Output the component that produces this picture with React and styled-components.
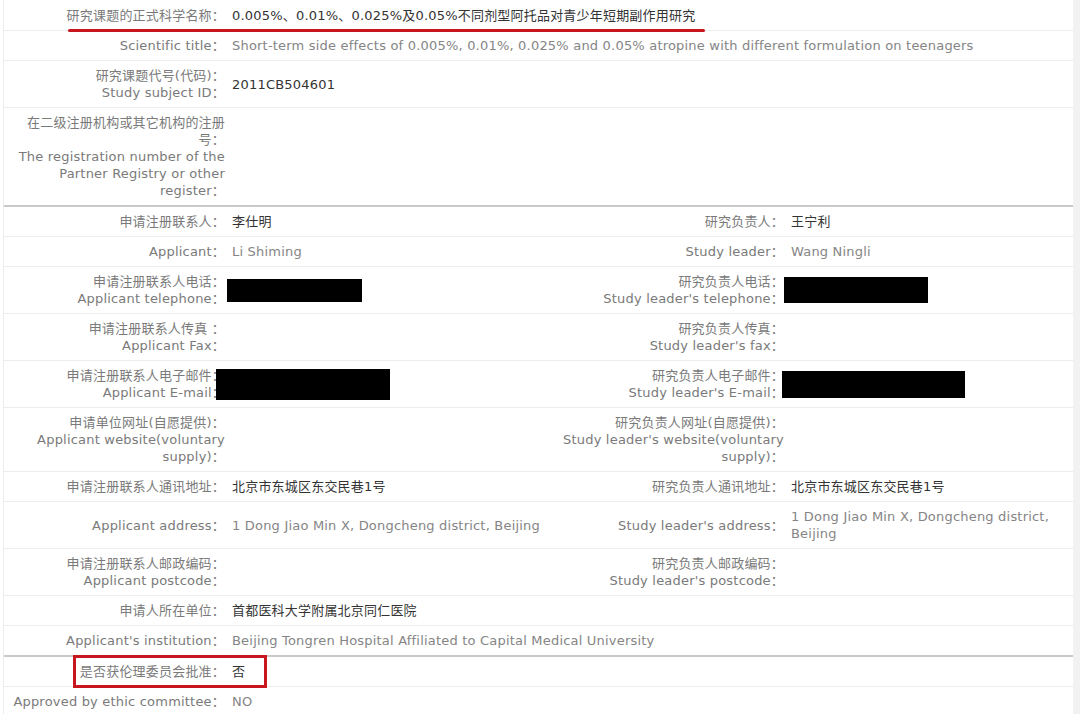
import styled, { createGlobalStyle } from "styled-components"

const Global = createGlobalStyle`
  html, body {
    margin: 0;
    padding: 0;
    background: #ffffff;
  }
  body {
    font-family: "DejaVu Sans", "Noto Sans CJK SC", sans-serif;
    font-size: 13px;
    letter-spacing: 0.2px;
  }
`

const Page = styled.div`
  display: flex;
  width: 1080px;
  height: 714px;
  overflow: hidden;
  background: #ffffff;
`

const Table = styled.div`
  flex: 1;
  margin-left: 3px;
  padding-top: 1px;
  border-left: 1px solid #ededed;
  display: flex;
  flex-direction: column;
`

const Strip = styled.div`
  width: 7px;
  background: #f2f2f2;
`

const Row = styled.div`
  position: relative;
  display: grid;
  grid-template-columns: ${p => (p.$split ? "228px 319px 240px 1fr" : "228px 1fr")};
  align-items: center;
  padding: 6px 0;
  line-height: 17px;
  border-bottom: ${p => (p.$thick ? "2px solid #c9c9c9" : "1px solid #ededed")};
`

const Label = styled.div`
  text-align: right;
  color: #7a7a7a;
  padding: 0 7px 0 2px;
`

const Value = styled.div`
  color: ${p => (p.$en ? "#858585" : "#333333")};
  padding-right: 10px;
`

const Redact = styled.div`
  width: ${p => p.$w}px;
  height: ${p => p.$h}px;
  margin-left: ${p => p.$shift}px;
  background: #000000;
`

const Underline = styled.span`
  position: absolute;
  left: 64px;
  bottom: -2px;
  width: 637px;
  height: 3px;
  border-radius: 2px;
  background: #c8161e;
`

const MarkBox = styled.span`
  position: absolute;
  left: 69px;
  top: -2px;
  width: 194px;
  height: 33px;
  box-sizing: border-box;
  border: 3px solid #c8161e;
`

const Two = ({ cn, en }) => (
  <>
    {cn}
    <br />
    {en}
  </>
)

export default function App() {
  return (
    <Page>
      <Global />
      <Table>
        <Row>
          <Label>研究课题的正式科学名称：</Label>
          <Value>0.005%、0.01%、0.025%及0.05%不同剂型阿托品对青少年短期副作用研究</Value>
          <Underline />
        </Row>
        <Row>
          <Label>Scientific title：</Label>
          <Value $en>
            Short-term side effects of 0.005%, 0.01%, 0.025% and 0.05% atropine with different formulation on teenagers
          </Value>
        </Row>
        <Row>
          <Label><Two cn="研究课题代号(代码)：" en="Study subject ID：" /></Label>
          <Value>2011CB504601</Value>
        </Row>
        <Row $thick>
          <Label>
            <Two cn="在二级注册机构或其它机构的注册号：" en="The registration number of the Partner Registry or other register：" />
          </Label>
          <Value />
        </Row>

        <Row $split>
          <Label>申请注册联系人：</Label>
          <Value>李仕明</Value>
          <Label>研究负责人：</Label>
          <Value>王宁利</Value>
        </Row>
        <Row $split>
          <Label>Applicant：</Label>
          <Value $en>Li Shiming</Value>
          <Label>Study leader：</Label>
          <Value $en>Wang Ningli</Value>
        </Row>
        <Row $split>
          <Label><Two cn="申请注册联系人电话：" en="Applicant telephone：" /></Label>
          <Value><Redact $w={135} $h={23} $shift={-5} /></Value>
          <Label><Two cn="研究负责人电话：" en="Study leader's telephone：" /></Label>
          <Value><Redact $w={144} $h={26} $shift={-7} /></Value>
        </Row>
        <Row $split>
          <Label><Two cn="申请注册联系人传真 ：" en="Applicant Fax：" /></Label>
          <Value />
          <Label><Two cn="研究负责人传真：" en="Study leader's fax：" /></Label>
          <Value />
        </Row>
        <Row $split>
          <Label><Two cn="申请注册联系人电子邮件：" en="Applicant E-mail：" /></Label>
          <Value><Redact $w={174} $h={31} $shift={-16} /></Value>
          <Label><Two cn="研究负责人电子邮件：" en="Study leader's E-mail：" /></Label>
          <Value><Redact $w={183} $h={27} $shift={-9} /></Value>
        </Row>
        <Row $split>
          <Label><Two cn="申请单位网址(自愿提供)：" en="Applicant website(voluntary supply)：" /></Label>
          <Value />
          <Label><Two cn="研究负责人网址(自愿提供)：" en="Study leader's website(voluntary supply)：" /></Label>
          <Value />
        </Row>
        <Row $split>
          <Label>申请注册联系人通讯地址：</Label>
          <Value>北京市东城区东交民巷1号</Value>
          <Label>研究负责人通讯地址：</Label>
          <Value>北京市东城区东交民巷1号</Value>
        </Row>
        <Row $split>
          <Label>Applicant address：</Label>
          <Value $en>1 Dong Jiao Min X, Dongcheng district, Beijing</Value>
          <Label>Study leader's address：</Label>
          <Value $en>1 Dong Jiao Min X, Dongcheng district, Beijing</Value>
        </Row>
        <Row $split>
          <Label><Two cn="申请注册联系人邮政编码：" en="Applicant postcode：" /></Label>
          <Value />
          <Label><Two cn="研究负责人邮政编码：" en="Study leader's postcode：" /></Label>
          <Value />
        </Row>

        <Row>
          <Label>申请人所在单位：</Label>
          <Value>首都医科大学附属北京同仁医院</Value>
        </Row>
        <Row $thick>
          <Label>Applicant's institution：</Label>
          <Value $en>Beijing Tongren Hospital Affiliated to Capital Medical University</Value>
        </Row>
        <Row>
          <Label>是否获伦理委员会批准：</Label>
          <Value>否</Value>
          <MarkBox />
        </Row>
        <Row>
          <Label>Approved by ethic committee：</Label>
          <Value $en>NO</Value>
        </Row>
      </Table>
      <Strip />
    </Page>
  )
}
